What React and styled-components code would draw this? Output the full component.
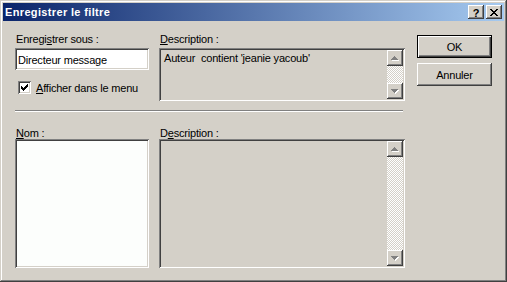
import React from 'react';
import styled, { createGlobalStyle } from 'styled-components';

const GlobalStyle = createGlobalStyle`
  html, body {
    margin: 0;
    padding: 0;
    background: #d4d0c8;
  }
  body {
    font-family: "Liberation Sans", Arial, sans-serif;
    font-size: 11px;
    letter-spacing: -0.2px;
    color: #000;
  }
`;

const raised = `
  box-shadow: inset -1px -1px #404040, inset 1px 1px #fff,
    inset -2px -2px #808080, inset 2px 2px #d4d0c8;
`;

const sunken = `
  box-shadow: inset 1px 1px #808080, inset -1px -1px #fff,
    inset 2px 2px #404040, inset -2px -2px #d4d0c8;
`;

// pixel drawings, one rect per run: [x, y, width]
const CHECK = [[6, 0, 1], [5, 1, 2], [0, 2, 1], [4, 2, 3], [0, 3, 2], [3, 3, 3], [0, 4, 5], [1, 5, 3], [2, 6, 1]];
const CLOSE = [[0, 0, 2], [6, 0, 2], [1, 1, 2], [5, 1, 2], [2, 2, 4], [3, 3, 2], [2, 4, 4], [1, 5, 2], [5, 5, 2], [0, 6, 2], [6, 6, 2]];

const Pixels = ({ runs, w, h, color, shadow }) => (
    <svg width={w + (shadow ? 1 : 0)} height={h + (shadow ? 1 : 0)} shapeRendering="crispEdges">
        {shadow && runs.map(([x, y, len], i) => (
            <rect key={'s' + i} x={x + 1} y={y + 1} width={len} height={1} fill={shadow} />
        ))}
        {runs.map(([x, y, len], i) => (
            <rect key={i} x={x} y={y} width={len} height={1} fill={color} />
        ))}
    </svg>
);

const arrowRuns = (up) =>
    [0, 1, 2, 3].map((i) => [3 - i, up ? i : 3 - i, 1 + 2 * i]);

const Window = styled.div`
    box-sizing: border-box;
    width: 507px;
    height: 282px;
    padding: 3px;
    display: flex;
    flex-direction: column;
    background: #d4d0c8;
    box-shadow: inset -1px -1px #404040, inset 1px 1px #d4d0c8,
        inset -2px -2px #808080, inset 2px 2px #fff;
`;

const TitleBar = styled.div`
    height: 18px;
    flex-shrink: 0;
    display: flex;
    align-items: center;
    justify-content: space-between;
    padding: 0 2px;
    background: linear-gradient(to right, #0a246a, #a6caf0);
`;

const Title = styled.div`
    color: #fff;
    font-weight: bold;
    letter-spacing: 0.35px;
    line-height: 14px;
`;

const CaptionButtons = styled.div`
    display: flex;
    gap: 2px;
`;

const CaptionButton = styled.div`
    box-sizing: border-box;
    width: 16px;
    height: 14px;
    display: flex;
    align-items: center;
    justify-content: center;
    background: #d4d0c8;
    font-weight: bold;
    font-size: 11px;
    line-height: 10px;
    padding-top: 1px;
    ${raised}
`;

const Client = styled.div`
    flex: 1;
    display: flex;
    padding: 11px 0 0 12px;
`;

const Main = styled.div`
    width: 390px;
    display: flex;
    flex-direction: column;
`;

const Grid = styled.div`
    display: grid;
    grid-template-columns: 134px 246px;
    column-gap: 10px;
    margin-top: ${(p) => p.$top || 0}px;
`;

const Field = styled.div`
    display: flex;
    flex-direction: column;
`;

const Label = styled.div`
    height: ${(p) => p.$h}px;
    line-height: 14px;
    padding-left: 1px;
    white-space: nowrap;
`;

const TextBox = styled.div`
    box-sizing: border-box;
    height: 22px;
    padding: 2px 3px 0;
    display: flex;
    align-items: center;
    background: #fff;
    line-height: 14px;
    ${sunken}
`;

const CheckRow = styled.div`
    display: flex;
    align-items: center;
    gap: 5px;
    margin: 11px 0 0 3px;
    height: 13px;
    line-height: 14px;
`;

const CheckBox = styled.div`
    box-sizing: border-box;
    width: 13px;
    height: 13px;
    padding: 3px;
    background: #fff;
    display: flex;
    ${sunken}
`;

const ReadBox = styled.div`
    box-sizing: border-box;
    height: ${(p) => p.$h}px;
    padding: 2px;
    display: flex;
    background: #d4d0c8;
    ${sunken}
`;

const ListBox = styled.div`
    box-sizing: border-box;
    height: ${(p) => p.$h}px;
    background: #fcfefc;
    ${sunken}
`;

const ReadText = styled.div`
    flex: 1;
    padding: 1px 3px;
    line-height: 14px;
    white-space: pre;
`;

const ScrollBar = styled.div`
    width: 16px;
    display: flex;
    flex-direction: column;
`;

const ScrollButton = styled.div`
    width: 16px;
    height: 16px;
    flex-shrink: 0;
    display: flex;
    align-items: center;
    justify-content: center;
    background: #d4d0c8;
    ${raised}
`;

const Track = styled.div`
    flex: 1;
    background-color: #fff;
    background-image: conic-gradient(#d4d0c8 25%, #fff 0 50%, #d4d0c8 0 75%, #fff 0);
    background-size: 2px 2px;
`;

const Separator = styled.div`
    width: 388px;
    margin-top: 9px;
    border-top: 1px solid #808080;
    border-bottom: 1px solid #fff;
`;

const ButtonColumn = styled.div`
    display: flex;
    flex-direction: column;
    gap: 5px;
    margin: 3px 0 0 12px;
`;

const PushButton = styled.div`
    box-sizing: border-box;
    width: 75px;
    height: 23px;
    display: flex;
    align-items: center;
    justify-content: center;
    background: #d4d0c8;
    line-height: 14px;
    ${(p) => p.$default
        ? `border: 1px solid #000; box-shadow: inset 1px 1px #fff, inset -1px -1px #404040, inset -2px -2px #808080;`
        : raised}
`;

const Scroller = () => (
    <ScrollBar>
        <ScrollButton>
            <Pixels runs={arrowRuns(true)} w={7} h={4} color="#808080" shadow="#fff" />
        </ScrollButton>
        <Track />
        <ScrollButton>
            <Pixels runs={arrowRuns(false)} w={7} h={4} color="#808080" shadow="#fff" />
        </ScrollButton>
    </ScrollBar>
);

const App = () => (
    <>
        <GlobalStyle />
        <Window>
            <TitleBar>
                <Title>Enregistrer le filtre</Title>
                <CaptionButtons>
                    <CaptionButton>?</CaptionButton>
                    <CaptionButton>
                        <Pixels runs={CLOSE} w={8} h={7} color="#000" />
                    </CaptionButton>
                </CaptionButtons>
            </TitleBar>
            <Client>
                <Main>
                    <Grid>
                        <Field>
                            <Label $h={16}>Enregi<u>s</u>trer sous :</Label>
                            <TextBox>Directeur message</TextBox>
                            <CheckRow>
                                <CheckBox>
                                    <Pixels runs={CHECK} w={7} h={7} color="#000" />
                                </CheckBox>
                                <span><u>A</u>fficher dans le menu</span>
                            </CheckRow>
                        </Field>
                        <Field>
                            <Label $h={16}><u>D</u>escription :</Label>
                            <ReadBox $h={53}>
                                <ReadText>Auteur  contient 'jeanie yacoub'</ReadText>
                                <Scroller />
                            </ReadBox>
                        </Field>
                    </Grid>
                    <Separator />
                    <Grid $top={14}>
                        <Field>
                            <Label $h={13}><u>N</u>om :</Label>
                            <ListBox $h={129} />
                        </Field>
                        <Field>
                            <Label $h={13}>D<u>e</u>scription :</Label>
                            <ReadBox $h={129}>
                                <ReadText />
                                <Scroller />
                            </ReadBox>
                        </Field>
                    </Grid>
                </Main>
                <ButtonColumn>
                    <PushButton $default>OK</PushButton>
                    <PushButton>Annuler</PushButton>
                </ButtonColumn>
            </Client>
        </Window>
    </>
);

export default App;
